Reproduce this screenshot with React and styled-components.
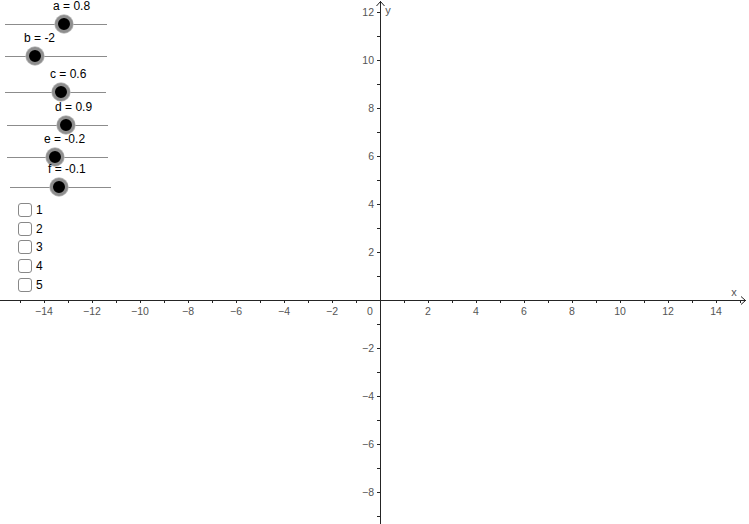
import React from "react";
import styled, { createGlobalStyle } from "styled-components";

const Global = createGlobalStyle`
  html, body { margin: 0; padding: 0; background: #fff; }
  body { font-family: "Liberation Sans", Arial, sans-serif; }
`;

const Canvas = styled.div`
  position: relative;
  width: 749px;
  height: 524px;
  overflow: hidden;
  background: #ffffff;
`;

const GraphSvg = styled.svg`
  position: absolute;
  left: 0;
  top: 0;
  display: block;
`;

const SliderWrap = styled.div`
  position: absolute;
  left: ${(p) => p.$x}px;
  top: ${(p) => p.$y}px;
  width: ${(p) => p.$w}px;
  height: 1px;
`;

const Track = styled.div`
  position: absolute;
  left: 0;
  right: 0;
  top: 0;
  height: 1px;
  background: #8c8c8c;
`;

const Knob = styled.div`
  position: absolute;
  top: 0;
  width: 12px;
  height: 12px;
  margin-left: -9px;
  margin-top: -9px;
  border-radius: 50%;
  background: #000;
  border: 3px solid #8e8e8e;
  box-shadow: 0 0 0 0.7px #bdbdbd;
`;

const SliderLabel = styled.span`
  position: absolute;
  top: -25px;
  margin-left: -11px;
  font-size: 12px;
  line-height: 14px;
  color: #000;
  white-space: nowrap;
`;

const CheckList = styled.div`
  position: absolute;
  left: 18px;
  top: 203px;
  display: flex;
  flex-direction: column;
  gap: 4.7px;
`;

const CheckRow = styled.label`
  display: flex;
  align-items: center;
  gap: 4px;
  height: 14px;
  font-size: 12px;
  color: #000;
`;

const Box = styled.span`
  box-sizing: border-box;
  width: 14px;
  height: 14px;
  border: 1px solid #888;
  border-radius: 3px;
  background: #fff;
`;

const sliders = [
  { name: "a", val: "0.8", x0: 5, x1: 107, y: 24, k: 64 },
  { name: "b", val: "-2", x0: 5, x1: 107, y: 56, k: 35 },
  { name: "c", val: "0.6", x0: 5, x1: 106, y: 92, k: 61 },
  { name: "d", val: "0.9", x0: 7, x1: 108, y: 125, k: 66 },
  { name: "e", val: "-0.2", x0: 7, x1: 108, y: 157, k: 55 },
  { name: "f", val: "-0.1", x0: 10, x1: 111, y: 187, k: 59 },
];

const OX = 380;
const OY = 300;
const U = 24;

function Graph() {
  const ticks = [];
  const labels = [];
  for (let i = -15; i <= 15; i++) {
    if (i === 0) continue;
    const x = OX + i * U;
    if (x < 0 || x > 740) continue;
    ticks.push(<line key={"xt" + i} x1={x + 0.5} y1={OY} x2={x + 0.5} y2={OY + 3} />);
    if (i % 2 === 0) {
      labels.push(
        <text key={"xl" + i} x={x} y={OY + 15} textAnchor="middle">
          {i < 0 ? "\u2212" + Math.abs(i) : i}
        </text>
      );
    }
  }
  for (let j = -9; j <= 12; j++) {
    if (j === 0) continue;
    const y = OY - j * U;
    if (y < 4 || y > 524) continue;
    ticks.push(<line key={"yt" + j} x1={OX - 3} y1={y + 0.5} x2={OX} y2={y + 0.5} />);
    if (j % 2 === 0) {
      labels.push(
        <text key={"yl" + j} x={OX - 6} y={y + 4} textAnchor="end">
          {j < 0 ? "\u2212" + Math.abs(j) : j}
        </text>
      );
    }
  }
  return (
    <GraphSvg width="749" height="524" viewBox="0 0 749 524">
      <g stroke="#252525" strokeWidth="1" fill="none">
        <line x1="0" y1={OY + 0.5} x2="746" y2={OY + 0.5} />
        <line x1={OX + 0.5} y1="1" x2={OX + 0.5} y2="524" />
        <polyline points={`741,${OY - 3.5} 745.5,${OY + 0.5} 741,${OY + 4.5}`} />
        <polyline points={`${OX - 3.5},6 ${OX + 0.5},1.5 ${OX + 4.5},6`} />
        {ticks}
      </g>
      <g fill="#555" fontFamily="Liberation Sans, Arial, sans-serif" fontSize="10.5">
        {labels}
        <text x="370" y={OY + 15} textAnchor="middle">0</text>
        <text x="734" y="296" textAnchor="middle" fontSize="11">x</text>
        <text x="388" y="14" textAnchor="middle" fontSize="11">y</text>
      </g>
    </GraphSvg>
  );
}

export default function App() {
  return (
    <>
      <Global />
      <Canvas>
        <Graph />
        {sliders.map((s) => (
          <SliderWrap key={s.name} $x={s.x0} $y={s.y} $w={s.x1 - s.x0}>
            <Track />
            <SliderLabel style={{ left: s.k - s.x0 }}>
              {s.name} = {s.val}
            </SliderLabel>
            <Knob style={{ left: s.k - s.x0 }} />
          </SliderWrap>
        ))}
        <CheckList>
          {[1, 2, 3, 4, 5].map((n) => (
            <CheckRow key={n}>
              <Box />
              {n}
            </CheckRow>
          ))}
        </CheckList>
      </Canvas>
    </>
  );
}
